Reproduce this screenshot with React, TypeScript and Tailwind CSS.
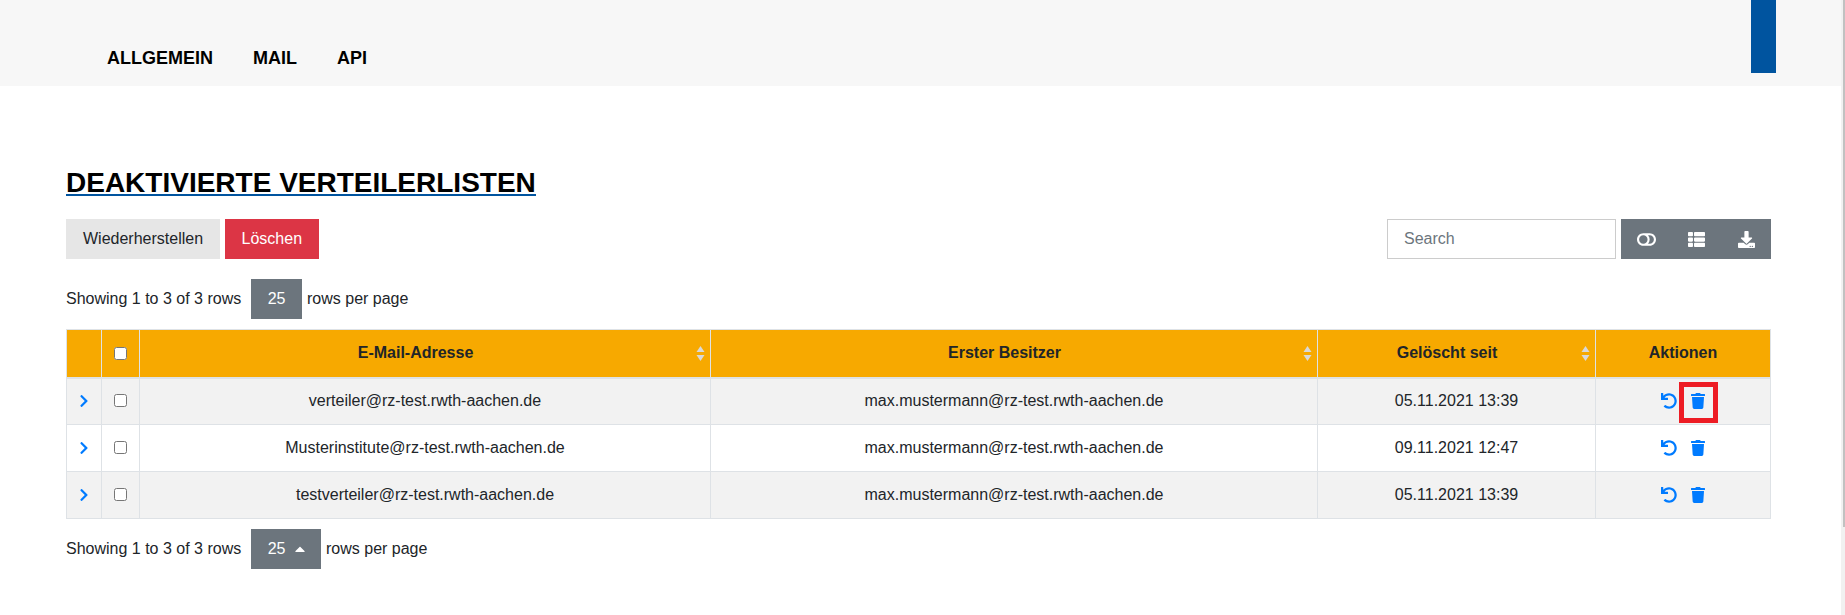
import React from 'react';
import { FaUndo, FaTrash, FaChevronRight, FaToggleOff, FaThList, FaDownload, FaCaretUp } from 'react-icons/fa';

const ROWS = [
  { mail: 'verteiler@rz-test.rwth-aachen.de', owner: 'max.mustermann@rz-test.rwth-aachen.de', date: '05.11.2021 13:39' },
  { mail: 'Musterinstitute@rz-test.rwth-aachen.de', owner: 'max.mustermann@rz-test.rwth-aachen.de', date: '09.11.2021 12:47' },
  { mail: 'testverteiler@rz-test.rwth-aachen.de', owner: 'max.mustermann@rz-test.rwth-aachen.de', date: '05.11.2021 13:39' },
];

const SortIcon = () => (
  <svg className="absolute right-[5px] top-[16px]" width="9" height="15" viewBox="0 0 9 15" fill="#d9d9d9">
    <path d="M4.5 0l4 6h-8z" />
    <path d="M4.5 15l4-6h-8z" />
  </svg>
);

const Pagination = ({ open }: { open?: boolean }) => (
  <div className="flex items-center h-10">
    <span>Showing 1 to 3 of 3 rows</span>
    <span className="ml-[10px] h-10 flex items-center justify-center gap-[9px] bg-[#6c757d] text-white px-[16.5px]">
      25
      {open && <FaCaretUp className="w-[10px] h-4" />}
    </span>
    <span className="ml-[5px]">rows per page</span>
  </div>
);

const App: React.FC = () => {
  return (
    <div className="flex h-[615px] overflow-hidden bg-white text-[#212529] text-[16px] font-['Liberation_Sans',Arial,sans-serif]">
      <div className="w-[1841px] shrink-0">
        {/* Navigation */}
        <nav className="h-[86px] bg-[#f7f7f7] flex items-start justify-between pl-[107px] pr-[65px]">
          <div className="flex gap-10 pt-[48px] font-bold text-black text-[18px] leading-[20px] uppercase">
            <a href="#">Allgemein</a>
            <a href="#">Mail</a>
            <a href="#">API</a>
          </div>
          <div className="w-[25px] h-[73px] bg-[#00549f]" />
        </nav>

        <main className="pl-[66px] pr-[70px]">
          <h1 className="mt-[86px] w-fit border-b-2 border-[#00549f] text-black font-bold text-[28px] leading-[22px] uppercase">
            Deaktivierte Verteilerlisten
          </h1>

          {/* Toolbar */}
          <div className="mt-[23px] flex justify-between">
            <div className="flex gap-[5px]">
              <button className="h-10 px-[17px] bg-[#e6e6e6] text-[#212529]">Wiederherstellen</button>
              <button className="h-10 px-[16.5px] bg-[#dc3545] text-white">Löschen</button>
            </div>
            <div className="flex gap-[5px]">
              <input
                type="text"
                placeholder="Search"
                className="w-[229px] h-10 px-4 border border-[#cccccc] bg-white placeholder:text-[#6c757d]"
              />
              <div className="flex bg-[#6c757d] text-white">
                <span className="w-[50px] flex items-center justify-center text-[19px]"><FaToggleOff /></span>
                <span className="w-[50px] flex items-center justify-center text-[17px]"><FaThList /></span>
                <span className="w-[50px] flex items-center justify-center text-[17px]"><FaDownload /></span>
              </div>
            </div>
          </div>

          <div className="mt-5">
            <Pagination />
          </div>

          {/* Table */}
          <table className="mt-[10px] w-[1704px] table-fixed border-collapse text-center">
            <colgroup>
              <col className="w-[35px]" />
              <col className="w-[38px]" />
              <col className="w-[571px]" />
              <col className="w-[607px]" />
              <col className="w-[278px]" />
              <col className="w-[175px]" />
            </colgroup>
            <thead>
              <tr className="h-[48px] bg-[#f7a900] font-bold">
                <th className="border border-[#dee2e6] border-b-2" />
                <th className="border border-[#dee2e6] border-b-2">
                  <input type="checkbox" className="block mx-auto w-[13px] h-[13px]" />
                </th>
                <th className="relative border border-[#dee2e6] border-b-2 pr-[19px]">E-Mail-Adresse<SortIcon /></th>
                <th className="relative border border-[#dee2e6] border-b-2 pr-[19px]">Erster Besitzer<SortIcon /></th>
                <th className="relative border border-[#dee2e6] border-b-2 pr-[19px]">Gelöscht seit<SortIcon /></th>
                <th className="border border-[#dee2e6] border-b-2">Aktionen</th>
              </tr>
            </thead>
            <tbody>
              {ROWS.map((row, i) => (
                <tr key={i} className={`h-[47px] ${i % 2 === 0 ? 'bg-[#f2f2f2]' : 'bg-white'}`}>
                  <td className="border border-[#dee2e6]">
                    <FaChevronRight className="mx-auto text-[14px] text-[#007bff]" />
                  </td>
                  <td className="border border-[#dee2e6]">
                    <input type="checkbox" className="block mx-auto -mt-[2px] w-[13px] h-[13px]" />
                  </td>
                  <td className="border border-[#dee2e6]">{row.mail}</td>
                  <td className="border border-[#dee2e6]">{row.owner}</td>
                  <td className="border border-[#dee2e6]">{row.date}</td>
                  <td className="border border-[#dee2e6]">
                    <div className="flex items-center justify-center gap-[14px] text-[16px] text-[#007bff]">
                      <FaUndo />
                      <span className="relative">
                        <FaTrash className="w-[14px] h-4" />
                        {i === 0 && (
                          <span className="absolute -left-[12px] -top-[11px] w-[39px] h-[41px] border-[5px] border-[#ed1c24]" />
                        )}
                      </span>
                    </div>
                  </td>
                </tr>
              ))}
            </tbody>
          </table>

          <div className="mt-[10px]">
            <Pagination open />
          </div>
        </main>
      </div>
      {/* Scrollbar */}
      <div className="w-[4px] h-full bg-[#f1f1f1] flex justify-end">
        <div className="w-[2px] h-[527px] bg-[#c1c1c1]" />
      </div>
    </div>
  );
};

export default App;
